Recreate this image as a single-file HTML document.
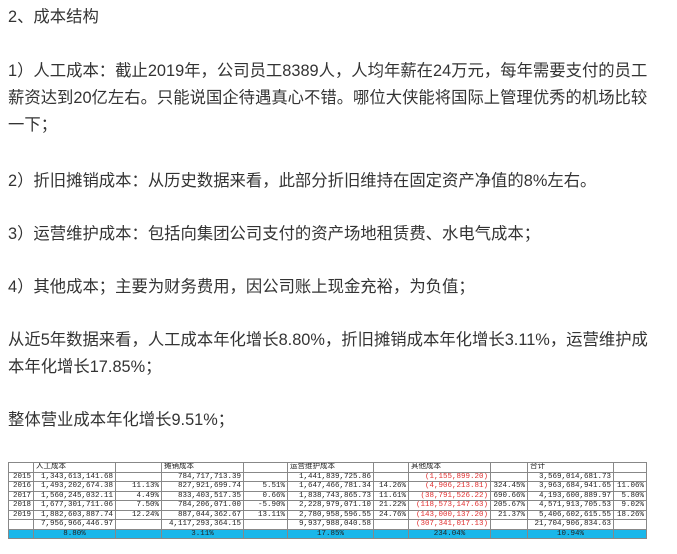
<!DOCTYPE html>
<html><head><meta charset="utf-8"><style>
body{margin:0;width:677px;height:554px;background:#fff;overflow:hidden;font-family:"Liberation Sans","Noto Sans CJK SC",sans-serif;color:#333;}
.t{position:absolute;left:8px;width:665px;font-size:16.35px;line-height:27px;}
p{margin:0;}
table{position:absolute;left:8px;top:462px;border-collapse:collapse;font-family:"Liberation Mono","Noto Sans CJK SC",monospace;font-size:7.5px;color:#222;table-layout:fixed;}
td{border:1px solid #888;height:8.5px;padding:0 2px;line-height:8.5px;white-space:nowrap;overflow:hidden;text-align:right;}
td.l{text-align:left}td.c{text-align:center}
.r{color:#e03030}
tr.b td{background:#1ab7ea;}
</style></head><body>
<div class="t" style="top:4px">2、成本结构</div>
<div class="t" style="top:58px">1）人工成本：截止2019年，公司员工8389人，人均年薪在24万元，每年需要支付的员工<br>薪资达到20亿左右。只能说国企待遇真心不错。哪位大侠能将国际上管理优秀的机场比较<br>一下；</div>
<div class="t" style="top:168px">2）折旧摊销成本：从历史数据来看，此部分折旧维持在固定资产净值的8%左右。</div>
<div class="t" style="top:221px">3）运营维护成本：包括向集团公司支付的资产场地租赁费、水电气成本；</div>
<div class="t" style="top:274px">4）其他成本；主要为财务费用，因公司账上现金充裕，为负值；</div>
<div class="t" style="top:327px">从近5年数据来看，人工成本年化增长8.80%，折旧摊销成本年化增长3.11%，运营维护成<br>本年化增长17.85%；</div>
<div class="t" style="top:407px">整体营业成本年化增长9.51%；</div>
<table>
<colgroup><col style="width:25px"><col style="width:82px"><col style="width:46px"><col style="width:82px"><col style="width:44px"><col style="width:86px"><col style="width:35px"><col style="width:82px"><col style="width:37px"><col style="width:86px"><col style="width:33px"></colgroup>
<tr><td></td><td class="l">人工成本</td><td></td><td class="l">摊销成本</td><td></td><td class="l">运营维护成本</td><td></td><td class="l">其他成本</td><td></td><td class="l">合计</td><td></td></tr>
<tr><td>2015</td><td>1,343,613,141.68</td><td></td><td>784,717,713.39</td><td></td><td>1,441,839,725.86</td><td></td><td class="r">(1,155,899.20)</td><td></td><td>3,569,014,681.73</td><td></td></tr>
<tr><td>2016</td><td>1,493,202,674.38</td><td>11.13%</td><td>827,921,699.74</td><td>5.51%</td><td>1,647,466,781.34</td><td>14.26%</td><td class="r">(4,906,213.81)</td><td>324.45%</td><td>3,963,684,941.65</td><td>11.06%</td></tr>
<tr><td>2017</td><td>1,560,245,032.11</td><td>4.49%</td><td>833,403,517.35</td><td>0.66%</td><td>1,838,743,865.73</td><td>11.61%</td><td class="r">(38,791,526.22)</td><td>690.66%</td><td>4,193,600,889.97</td><td>5.80%</td></tr>
<tr><td>2018</td><td>1,677,301,711.06</td><td>7.50%</td><td>784,206,071.00</td><td>-5.90%</td><td>2,228,979,071.10</td><td>21.22%</td><td class="r">(118,573,147.63)</td><td>205.67%</td><td>4,571,913,705.53</td><td>9.02%</td></tr>
<tr><td>2019</td><td>1,882,603,887.74</td><td>12.24%</td><td>887,044,362.67</td><td>13.11%</td><td>2,780,958,596.55</td><td>24.76%</td><td class="r">(143,000,137.20)</td><td>21.37%</td><td>5,406,602,615.55</td><td>18.26%</td></tr>
<tr><td></td><td>7,956,966,446.97</td><td></td><td>4,117,293,364.15</td><td></td><td>9,937,988,040.58</td><td></td><td class="r">(307,341,017.13)</td><td></td><td>21,704,906,834.63</td><td></td></tr>
<tr class="b"><td></td><td class="c">8.80%</td><td></td><td class="c">3.11%</td><td></td><td class="c">17.85%</td><td></td><td class="c">234.04%</td><td></td><td class="c">10.94%</td><td></td></tr>
</table>
</body></html>
